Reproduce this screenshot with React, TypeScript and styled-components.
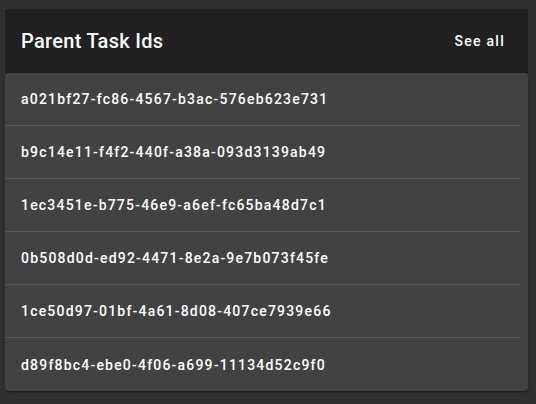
import React from "react";
import styled, { createGlobalStyle } from "styled-components";

const Global = createGlobalStyle`
  html, body { margin: 0; padding: 0; background: #303030; }
  body { font-family: Roboto, "Noto Sans", sans-serif; -webkit-font-smoothing: antialiased; }
`;

const Page = styled.div`
  padding: 9px 8px 14px 5px;
  width: 536px;
  height: 404px;
  box-sizing: border-box;
`;

const Card = styled.div`
  display: flex;
  flex-direction: column;
  width: 523px;
`;

const Header = styled.div`
  height: 64px;
  background: #212121;
  display: flex;
  align-items: center;
  justify-content: space-between;
  padding: 0 16px;
  box-sizing: border-box;
`;

const Title = styled.h2`
  margin: 0;
  font-size: 20px;
  font-weight: 500;
  color: #fff;
  letter-spacing: 0.3px;
`;

const SeeAll = styled.button`
  background: none;
  border: none;
  color: #fff;
  font-family: Roboto, sans-serif;
  font-size: 14px;
  font-weight: 500;
  letter-spacing: 1.25px;
  padding: 6px 7px 6px 8px;
  cursor: pointer;
`;

const List = styled.ul`
  list-style: none;
  margin: 0;
  padding: 0;
  background: #424242;
  border-radius: 4px;
  box-shadow: 0 2px 1px -1px rgba(0,0,0,0.2), 0 1px 1px 0 rgba(0,0,0,0.14), 0 1px 3px 0 rgba(0,0,0,0.12);
`;

const Item = styled.li<{ $last?: boolean }>`
  display: flex;
  align-items: center;
  padding: 0 16px;
  margin-right: 7px;
  color: #fff;
  font-size: 14px;
  font-weight: 500;
  letter-spacing: 1.2px;
  border-bottom: ${(p) => (p.$last ? "none" : "1px solid rgba(255,255,255,0.12)")};
  height: ${(p) => (p.$last ? "53px" : "52px")};
`;

const ids = [
  "a021bf27-fc86-4567-b3ac-576eb623e731",
  "b9c14e11-f4f2-440f-a38a-093d3139ab49",
  "1ec3451e-b775-46e9-a6ef-fc65ba48d7c1",
  "0b508d0d-ed92-4471-8e2a-9e7b073f45fe",
  "1ce50d97-01bf-4a61-8d08-407ce7939e66",
  "d89f8bc4-ebe0-4f06-a699-11134d52c9f0",
];

export default function App() {
  return (
    <>
      <Global />
      <Page>
        <Card>
          <Header>
            <Title>Parent Task Ids</Title>
            <SeeAll>See all</SeeAll>
          </Header>
          <List>
            {ids.map((id, i) => (
              <Item key={id} $last={i === ids.length - 1}>
                {id}
              </Item>
            ))}
          </List>
        </Card>
      </Page>
    </>
  );
}
